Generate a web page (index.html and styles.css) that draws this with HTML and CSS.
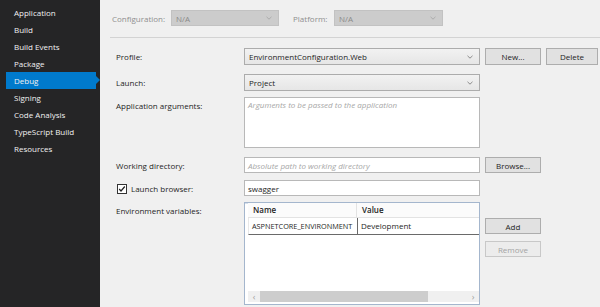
FILE: index.html
```html
<!DOCTYPE html>
<html>
<head>
<meta charset="utf-8">
<link rel="stylesheet" href="styles.css">
</head>
<body>
<div class="app">
  <nav class="sidebar">
    <div class="nav-item">Application</div>
    <div class="nav-item">Build</div>
    <div class="nav-item">Build Events</div>
    <div class="nav-item">Package</div>
    <div class="nav-item active">Debug</div>
    <div class="nav-item">Signing</div>
    <div class="nav-item">Code Analysis</div>
    <div class="nav-item">TypeScript Build</div>
    <div class="nav-item">Resources</div>
  </nav>
  <main class="main">
    <div class="topbar">
      <span class="top-label conf-label">Configuration:</span>
      <div class="combo disabled conf-combo"><span>N/A</span><svg class="chev" width="6" height="4" viewBox="0 0 6 4"><polyline points="0.5,0.8 3,3.2 5.5,0.8" fill="none" stroke="#a8a8a8" stroke-width="0.9"/></svg></div>
      <span class="top-label plat-label">Platform:</span>
      <div class="combo disabled plat-combo"><span>N/A</span><svg class="chev" width="6" height="4" viewBox="0 0 6 4"><polyline points="0.5,0.8 3,3.2 5.5,0.8" fill="none" stroke="#a8a8a8" stroke-width="0.9"/></svg></div>
    </div>
    <div class="form">
      <div class="label">Profile:</div>
      <div class="combo h17"><span>EnvironmentConfiguration.Web</span><svg class="chev" width="6" height="4" viewBox="0 0 6 4"><polyline points="0.5,0.8 3,3.2 5.5,0.8" fill="none" stroke="#808080" stroke-width="0.9"/></svg></div>
      <div class="btn h17">New...</div>
      <div class="btn h17">Delete</div>

      <div class="label">Launch:</div>
      <div class="combo h17"><span>Project</span><svg class="chev" width="6" height="4" viewBox="0 0 6 4"><polyline points="0.5,0.8 3,3.2 5.5,0.8" fill="none" stroke="#808080" stroke-width="0.9"/></svg></div>
      <div></div><div></div>

      <div class="label">Application arguments:</div>
      <div class="textbox area"><span class="placeholder">Arguments to be passed to the application</span></div>
      <div></div><div></div>

      <div class="label">Working directory:</div>
      <div class="textbox h16"><span class="placeholder">Absolute path to working directory</span></div>
      <div class="btn h16">Browse...</div>
      <div></div>

      <div class="label check-label"><span class="checkbox"><svg width="8" height="8" viewBox="0 0 8 8"><polyline points="1.2,4 3,6 6.8,1.5" fill="none" stroke="#222" stroke-width="1.2"/></svg></span>Launch browser:</div>
      <div class="textbox h16"><span>swagger</span></div>
      <div></div><div></div>

      <div class="label">Environment variables:</div>
      <div class="envgrid">
        <div class="env-head">
          <div class="cell">Name</div>
          <div class="cell">Value</div>
        </div>
        <div class="env-row">
          <div class="cell">ASPNETCORE_ENVIRONMENT</div>
          <div class="cell">Development</div>
        </div>
        <div class="env-fill"></div>
        <div class="hscroll">
          <span class="arrow">&lsaquo;</span>
          <div class="track"><div class="thumb"></div></div>
          <span class="arrow">&rsaquo;</span>
        </div>
      </div>
      <div class="env-btns">
        <div class="btn h16">Add</div>
        <div class="btn h16 off">Remove</div>
      </div>
      <div></div>
    </div>
  </main>
</div>
</body>
</html>
```

FILE: styles.css
```css
* { box-sizing: border-box; }
html, body { margin: 0; padding: 0; }
body {
  width: 600px;
  height: 307px;
  overflow: hidden;
  font-family: "Open Sans", "Noto Sans", sans-serif;
  font-size: 8px;
  color: #1e1e1e;
  background: #f0f0f0;
}
.app { display: flex; height: 307px; }

.sidebar {
  width: 100px;
  flex: none;
  background: #252526;
  padding-top: 4px;
}
.nav-item {
  height: 17px;
  line-height: 17px;
  padding-left: 14px;
  color: #f1f1f1;
  position: relative;
}
.nav-item.active {
  background: #007acc;
  margin-left: 6px;
  width: 90px;
  padding-left: 8px;
}
.nav-item.active::after {
  content: "";
  position: absolute;
  right: -4px;
  top: 4px;
  border-left: 4px solid #007acc;
  border-top: 4.5px solid transparent;
  border-bottom: 4.5px solid transparent;
}

.main { flex: 1; display: flex; flex-direction: column; }

.topbar {
  height: 38px;
  margin-left: 10px;
  padding-left: 2px;
  border-bottom: 1px solid #d3d3d3;
  display: flex;
  align-items: center;
  padding-bottom: 1px;
}
.top-label { color: #8f8f8f; }
.conf-label { width: 59px; }
.plat-label { width: 41px; margin-left: 14px; }
.conf-combo { width: 108px; }
.plat-combo { width: 109px; }

.combo {
  position: relative;
  display: flex;
  align-items: center;
  padding-left: 4px;
  border: 1px solid #acacac;
  background: linear-gradient(#f2f2f2, #e6e6e6);
  height: 17px;
}
.combo.disabled {
  height: 16px;
  background: #cccccc;
  border-color: #c2c2c2;
  color: #8a8a8a;
}
.chev { position: absolute; right: 6px; top: 6px; }
.combo.disabled .chev { right: 6px; top: 5px; }

.form {
  margin-top: 10px;
  margin-left: 16px;
  display: grid;
  grid-template-columns: 123px 236px 56px 52px;
  grid-template-rows: 26px 23px 60px 23px 22px 103px;
  column-gap: 5px;
  align-items: start;
}
.label { line-height: 17px; white-space: nowrap; }
.check-label { display: flex; align-items: center; height: 17px; }
.checkbox {
  width: 10px;
  height: 10px;
  margin-left: 1px;
  margin-right: 4px;
  background: #fff;
  border: 1px solid #333;
  display: flex;
  align-items: center;
  justify-content: center;
}
.h17 { height: 17px; }
.h16 { height: 16px; }

.btn {
  display: flex;
  align-items: center;
  justify-content: center;
  background: #e1e1e1;
  border: 1px solid #adadad;
}
.btn.off { background: #ececec; border-color: #c8c8c8; color: #a3a3a3; }

.textbox {
  background: #fff;
  border: 1px solid #b8b8b8;
  padding-left: 3px;
  display: flex;
  align-items: center;
}
.textbox.area { height: 51px; align-items: flex-start; padding-top: 1px; }
.placeholder { color: #a6a6a6; font-style: italic; }

.envgrid {
  height: 103px;
  border: 1px solid #a4b6cd;
  box-shadow: inset 0 1px 0 #d6e0ec;
  background: #fff;
  padding: 0 0 1px 3px;
  display: flex;
  flex-direction: column;
}
.env-head, .env-row {
  display: grid;
  grid-template-columns: 109px 1fr;
}
.env-head { height: 15px; border-bottom: 1px solid #e3e3e3; background: #fbfbfb; }
.env-head .cell { padding-left: 5px; line-height: 14px; font-weight: 600; }
.env-head .cell:first-child { border-right: 1px solid #e3e3e3; }
.env-row { height: 17px; border-bottom: 1px solid #6a6a6a; border-left: 1px solid #e8e8e8; }
.env-row .cell { padding-left: 3px; line-height: 16px; white-space: nowrap; overflow: hidden; }
.env-row .cell:first-child { border-right: 1px solid #6a6a6a; font-size: 7.3px; }
.env-fill { flex: 1; }
.hscroll {
  height: 11px;
  background: #f0f0f0;
  display: flex;
  align-items: center;
  margin-bottom: 1px;
}
.arrow { width: 12px; text-align: center; color: #a0a0a0; font-size: 9px; line-height: 11px; }
.track { flex: 1; height: 11px; }
.thumb { width: 168px; height: 11px; background: #cdcdcd; margin-left: 0; }

.env-btns {
  display: flex;
  flex-direction: column;
  gap: 7px;
  padding-top: 16px;
}
```
